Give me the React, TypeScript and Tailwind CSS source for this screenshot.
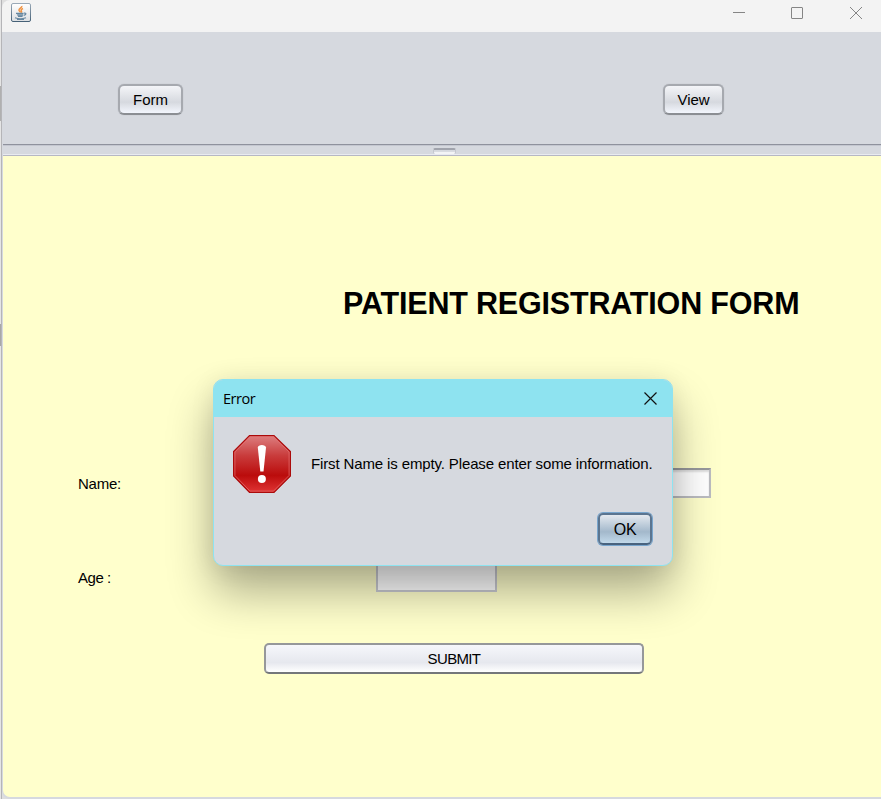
import React from "react";

const nimbus =
  "box-border flex items-center justify-center rounded-[6px] border-2 border-[#a6a9af] border-b-[#8b8e93] bg-linear-to-b from-[#f4f5f8] via-[#d6d9df] via-60% to-[#f3f6fd] pt-px text-[15px] tracking-[-0.05px] shadow-[0_0_1px_#a5a8ae]";

function JavaIcon() {
  return (
    <svg width="20" height="19" viewBox="0 0 20 19" className="block" fill="none">
      <defs>
        <linearGradient id="jb" x1="0" y1="0" x2="0" y2="1">
          <stop offset="0" stopColor="#fff" />
          <stop offset="1" stopColor="#dcdfe2" />
        </linearGradient>
        <linearGradient id="js" x1="0" y1="0" x2="0" y2="1">
          <stop offset="0" stopColor="#9aa9b7" />
          <stop offset="1" stopColor="#466177" />
        </linearGradient>
      </defs>
      <rect x=".5" y=".5" width="19" height="18" rx="1.5" fill="url(#jb)" stroke="url(#js)" />
      <path d="M10.800 3C11.300 5 7.500 5.300 8 7.300C8.200 8.200 9.500 8.500 9 9.500M12 5.500C9.500 6.500 10 7.500 10.500 8.200C10.800 8.800 10.500 9.300 10 9.600" stroke="#f0913f" strokeWidth="1.500" />
      <path d="M5.200 10.300H12.500L12 13.200H6.800Z" fill="#a9bccb" />
      <path d="M5 10.300H12.500M6.300 12H12M7 13.300H11.500M13 10.200C15.700 9.700 15.400 11.800 12.700 12.300M4 14.700C7 16 12 15.800 15 14.700M6 16.300H13" stroke="#6687a0" strokeWidth="1.200" />
    </svg>
  );
}

function ErrorIcon() {
  return (
    <svg width="58" height="58" viewBox="1 1 58 58" className="block shrink-0">
      <defs>
        <linearGradient id="er" x1="0" y1="0" x2="0" y2="1">
          <stop offset="0" stopColor="#dd7f80" />
          <stop offset=".35" stopColor="#c93c3c" />
          <stop offset=".7" stopColor="#bb0c0c" />
          <stop offset="1" stopColor="#e03434" />
        </linearGradient>
      </defs>
      <path d="M17.500 1.600H42L58.400 17.500V42L42 58.400H17.500L1.600 42V17.500Z" fill="url(#er)" stroke="#ab0b0b" strokeWidth="1.200" />
      <path d="M18 2.900H41.500L57.100 18V41.500L41.500 57.100H18L2.900 41.500V18Z" fill="none" stroke="#e87676" strokeOpacity=".65" strokeWidth="1" />
      <path d="M25.800 13.500C25.800 10 34 10 34 13.500L31.500 37.500H28.300Z" fill="#fff" />
      <circle cx="29.900" cy="45" r="4" fill="#fff" />
    </svg>
  );
}

function TitleBar() {
  return (
    <header className="flex h-8 shrink-0 bg-[#f3f3f3] pl-[9px] pt-[3px]">
      <JavaIcon />
      <svg width="130" height="14" viewBox="0 0 130 14" className="ml-auto mr-[18px] mt-[3px]" fill="none" stroke="#858585">
        <path d="M0 6.500H12" />
        <rect x="58.500" y="1.500" width="11" height="11" rx=".5" />
        <path d="M117 1L129 13M129 1L117 13" />
      </svg>
    </header>
  );
}

function ErrorDialog() {
  return (
    <div className="absolute left-[213px] top-[379px] flex h-[187px] w-[460px] flex-col overflow-hidden rounded-[10px] border border-[#8ee3f0] bg-[#d6d9df] shadow-[0_26px_46px_rgba(0,0,0,0.32),0_2px_24px_rgba(0,0,0,0.08)]">
      <div className="flex h-[37px] shrink-0 items-center justify-between bg-[#8ee3f0] pl-[9px] pr-[15px] font-['Open_Sans',sans-serif] text-[14.500px]">
        <span className="tracking-[-0.5px]">Error</span>
        <svg width="13" height="13" viewBox="0 0 13 13" fill="none" stroke="#111" strokeWidth="1.200" className="-mt-px">
          <path d="M.5 .5L12.500 12.500M12.500 .5L.5 12.500" />
        </svg>
      </div>
      <div className="flex items-center pl-[19px] pt-[18px]">
        <ErrorIcon />
        <p className="ml-5 whitespace-nowrap text-[15px] tracking-[-0.13px]">First Name is empty. Please enter some information.</p>
      </div>
      <button className="ml-auto mr-5 mt-[20px] h-[32px] w-[54px] rounded-[5px] border-2 border-[#5b7590] border-b-[#49637f] bg-linear-to-b from-[#e4e9ef] via-[#a3b8cb] via-60% to-[#c2d9ea] pt-0.5 text-[16px] leading-none tracking-[-0.3px] shadow-[0_0_0_1px_#78a5cd]">OK</button>
    </div>
  );
}

export default function App() {
  return (
    <div className="relative flex h-[799px] w-[881px] overflow-hidden bg-[#dedede] font-['Liberation_Sans',Arial,sans-serif] text-[15px] text-black">
      <div className="flex w-0.5 shrink-0 flex-col border-r border-[#b5b5b8] bg-[#e5e5e5]">
        <div className="mt-[86px] h-[35px] bg-[#b0b0b0]" />
        <div className="mt-[203px] h-[22px] bg-[#a8a8a8]" />
      </div>
      <div className="flex h-[799px] grow flex-col overflow-hidden rounded-l-[8px] bg-[#d6d9df]">
        <TitleBar />
        <nav className="flex h-[112px] shrink-0 justify-between pl-[116px] pr-[157px] pt-[52px]">
          <button className={nimbus + " h-[31px] w-[65px]"}>Form</button>
          <button className={nimbus + " h-[31px] w-[61px]"}>View</button>
        </nav>
        <div className="ml-px flex h-3 shrink-0 justify-center border-b border-t border-b-[#b6b8c4] border-t-[#8f929d] pt-[3px] shadow-[inset_0_1px_0_#c4c7d0,inset_0_-1px_0_#e9ebf0]">
          <div className="mr-[-5px] h-[6px] w-[23px] rounded-[2px] border-x border-t-2 border-x-[#c4c7cf] border-t-[#a0a3ac] bg-linear-to-b from-[#d6d9df] from-35% to-[#f3f4f6] to-60%" />
        </div>
        <main className="ml-px h-[641px] shrink-0 overflow-hidden rounded-bl-[7px] bg-[#ffffcc]">
          <h1 className="ml-[340px] mt-[129px] whitespace-nowrap text-[30.500px] font-bold leading-[37px] tracking-[-0.18px]">PATIENT REGISTRATION FORM</h1>
          <div className="mt-[146px] flex h-[30px] items-center pl-[75px] pr-[170px]">
            <label className="pt-0.5 tracking-[-0.25px]">Name:</label>
            <div className="ml-auto h-[30px] w-[335px] border-2 border-[#bbbcc0] border-t-[#97989c] bg-white shadow-[inset_0_2px_2px_#ddd]" />
          </div>
          <div className="mt-[64px] flex h-[30px] items-center pl-[75px]">
            <label className="w-[298px] pt-0.5 tracking-[-0.45px]">Age :</label>
            <div className="h-[30px] w-[121px] border-2 border-[#c8c9d0] border-t-[#8d8f94] bg-white" />
          </div>
          <button className="ml-[261px] mt-[51px] h-[31px] w-[380px] rounded-[5px] border-2 border-[#96989a] border-b-[#74777a] bg-linear-to-b from-[#f6f7fb] via-[#e6e8ee] via-65% to-white pt-0.5 text-[15px] tracking-[-0.65px]">SUBMIT</button>
        </main>
      </div>
      <ErrorDialog />
    </div>
  );
}
